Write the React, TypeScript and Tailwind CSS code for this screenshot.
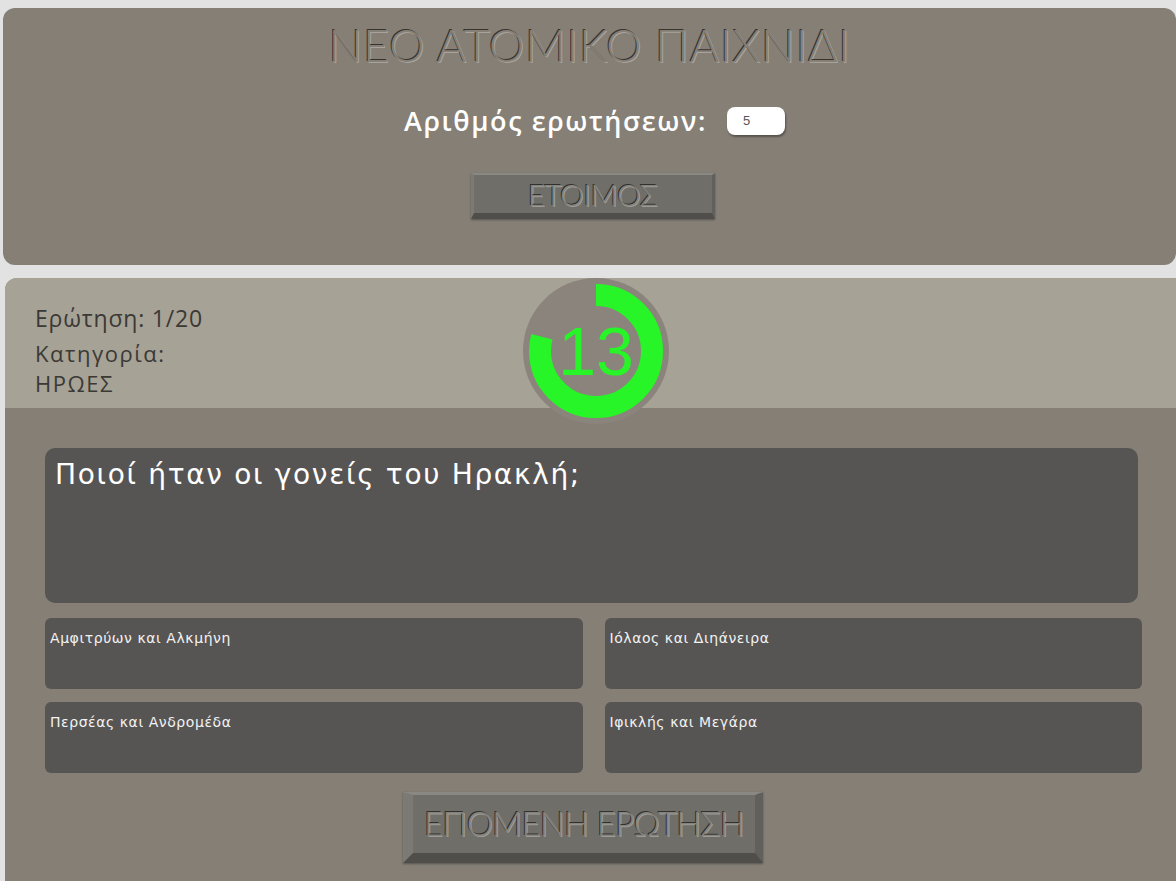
const engraved = {
  light: '[text-shadow:-1px_-1px_0_rgba(40,38,35,0.85),1px_1px_0_rgba(200,196,190,0.55)]',
}

const answers = [
  'Αμφιτρύων και Αλκμήνη',
  'Ιόλαος και Διηάνειρα',
  'Περσέας και Ανδρομέδα',
  'Ιφικλής και Μεγάρα',
]

function Timer({ value, progress }: { value: number; progress: number }) {
  const r = 56
  const c = 2 * Math.PI * r
  return (
    <div className="absolute left-[518px] top-0 z-10 h-[146px] w-[146px]">
      <svg width="146" height="146" viewBox="0 0 146 146">
        <circle cx="73" cy="73" r="73" fill="#8b847c" />
        <circle
          cx="73"
          cy="73"
          r={r}
          fill="none"
          stroke="#27f527"
          strokeWidth="22"
          strokeDasharray={`${c * progress} ${c}`}
          transform="rotate(-90 73 73)"
        />
      </svg>
      <div className="absolute inset-0 flex items-center justify-center font-['Liberation_Sans',sans-serif] text-[68px] leading-none text-[#27f527]">
        {value}
      </div>
    </div>
  )
}

function BevelButton({ label, size }: { label: string; size: 'sm' | 'lg' }) {
  const box =
    size === 'sm'
      ? 'h-[46px] w-[244px] border-t-[2px] border-l-[3px] border-r-[3px] border-b-[6px] text-[30px]'
      : 'h-[71px] w-[360px] border-t-[3px] border-l-[10px] border-r-[8px] border-b-[10px] text-[33px]'
  return (
    <button
      className={`${box} flex items-center justify-center border-t-[#8a8883] border-l-[#7c7a75] border-r-[#62605c] border-b-[#4f4e4a] bg-[#6f6e69] font-['Lato',sans-serif] font-light tracking-[-0.02em] text-[#85837e] shadow-[0_1px_2px_rgba(0,0,0,0.35)] ${engraved.light}`}
    >
      {label}
    </button>
  )
}

export default function App() {
  return (
    <div className="min-h-screen overflow-hidden bg-[#e2e2e2] pt-2">
      {/* new game panel */}
      <section className="ml-[3px] flex h-[257px] w-[1173px] flex-col items-center rounded-[12px] bg-[#857f76]">
        <h1
          className={`mt-[12px] font-['Lato',sans-serif] text-[45px] font-light leading-[50px] tracking-[0.015em] text-[#857f76] ${engraved.light}`}
        >
          ΝΕΟ ΑΤΟΜΙΚΟ ΠΑΙΧΝΙΔΙ
        </h1>
        <div className="mt-[35px] flex items-center gap-[20px] pl-[10px]">
          <span className="font-['Open_Sans',sans-serif] text-[27px] font-semibold leading-[32px] tracking-[0.06em] text-white">
            Αριθμός ερωτήσεων:
          </span>
          <div className="flex h-[28px] w-[58px] items-center rounded-[8px] bg-white pl-[16px] font-['Liberation_Sans',sans-serif] text-[13px] text-[#555] shadow-[1px_2px_2px_rgba(0,0,0,0.35)]">
            5
          </div>
        </div>
        <div className="mt-[36px] ml-[6px]">
          <BevelButton label="ΕΤΟΙΜΟΣ" size="sm" />
        </div>
      </section>

      {/* question panel */}
      <section className="relative mt-[13px] ml-[5px] w-[1190px] overflow-visible rounded-t-[12px] bg-[#857f76]">
        <div className="h-[130px] rounded-t-[12px] bg-[#a6a295] pl-[30px] pt-[26px] font-['Open_Sans',sans-serif] tracking-[0.05em] text-[#3b3935]">
          <div className="text-[23px] leading-[28px]">Ερώτηση: 1/20</div>
          <div className="mt-[6px] text-[22px] leading-[30px] tracking-[0.07em]">Κατηγορία:</div>
          <div className="text-[22px] leading-[30px] tracking-[0.07em]">ΗΡΩΕΣ</div>
        </div>
        <Timer value={13} progress={0.79} />

        <div className="px-[40px] pb-[40px] pt-[40px]">
          <div className="h-[155px] w-[1093px] rounded-[10px] bg-[#575554] px-[10px] pt-[9px] font-['DejaVu_Sans',sans-serif] text-[28px] leading-[36px] tracking-[0.06em] text-white">
            Ποιοί ήταν οι γονείς του Ηρακλή;
          </div>
          <div className="mt-[15px] grid w-[1097px] grid-cols-2 gap-x-[22px] gap-y-[13px]">
            {answers.map((a) => (
              <div
                key={a}
                className="h-[71px] rounded-[6px] bg-[#575554] px-[5px] pt-[11px] font-['DejaVu_Sans',sans-serif] text-[14px] leading-[18px] tracking-[0.04em] text-[#f2f2f2]"
              >
                {a}
              </div>
            ))}
          </div>
          <div className="ml-[358px] mt-[19px]">
            <BevelButton label="ΕΠΟΜΕΝΗ ΕΡΩΤΗΣΗ" size="lg" />
          </div>
        </div>
      </section>
    </div>
  )
}
